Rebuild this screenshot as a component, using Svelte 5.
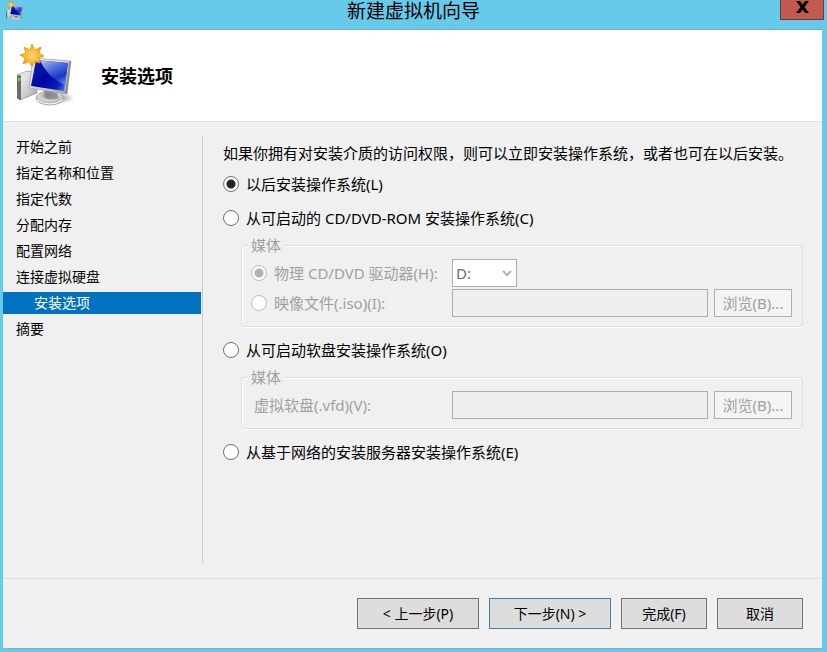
<script lang="ts">
    const steps = [
        "开始之前",
        "指定名称和位置",
        "指定代数",
        "分配内存",
        "配置网络",
        "连接虚拟硬盘",
        "安装选项",
        "摘要",
    ];
    const current = "安装选项";

    let source = $state("later");
    let media = $state("drive");
    let drive = $state("D:");
</script>

{#snippet computerIcon(id: string)}
    <svg class="computer" viewBox="0 0 58 64" aria-hidden="true">
        <defs>
            <linearGradient id="{id}-screen" x1="0" y1="0.2" x2="1" y2="0.8">
                <stop offset="0" stop-color="#0a1fb4" />
                <stop offset="0.45" stop-color="#0004a0" />
                <stop offset="0.8" stop-color="#0a1cb8" />
                <stop offset="1" stop-color="#3d74e6" />
            </linearGradient>
            <linearGradient id="{id}-glare" x1="0.1" y1="0" x2="0.7" y2="1">
                <stop offset="0" stop-color="#e2f2ff" />
                <stop offset="0.35" stop-color="#6fa0f0" />
                <stop offset="0.75" stop-color="#1f3fd0" />
                <stop offset="1" stop-color="#5a8cec" />
            </linearGradient>
            <linearGradient id="{id}-metal" x1="0" y1="0" x2="1" y2="1">
                <stop offset="0" stop-color="#f4f4f4" />
                <stop offset="0.6" stop-color="#cfcfcf" />
                <stop offset="1" stop-color="#9a9a9a" />
            </linearGradient>
            <radialGradient id="{id}-base" cx="0.45" cy="0.3" r="0.7">
                <stop offset="0" stop-color="#8a8a8a" />
                <stop offset="0.5" stop-color="#d8d8d8" />
                <stop offset="1" stop-color="#a2a2a2" />
            </radialGradient>
            <radialGradient id="{id}-star">
                <stop offset="0" stop-color="#ffd978" />
                <stop offset="0.6" stop-color="#ffb82e" />
                <stop offset="1" stop-color="#f39a10" />
            </radialGradient>
            <radialGradient id="{id}-shade">
                <stop offset="0" stop-color="#555" stop-opacity="0.6" />
                <stop offset="1" stop-color="#555" stop-opacity="0" />
            </radialGradient>
        </defs>
        <ellipse cx="43" cy="54" rx="14" ry="6" fill="url(#{id}-shade)" />
        <path d="M0 31 10 27 20 29V49L3 56 0 54Z" fill="url(#{id}-metal)" stroke="#8f8f8f" stroke-width="0.7" />
        <path d="M0 31 4 31.500V55.500L3 56 0 54Z" fill="#6d6d6d" />
        <path d="M1 34H3.500V37H1Z" fill="#5ee01d" />
        <ellipse cx="33" cy="54" rx="14" ry="7" fill="url(#{id}-base)" stroke="#a2a2a2" stroke-width="0.7" />
        <path d="M27 46 40 49 42 54Q35 57 28 54Z" fill="#7f7f7f" opacity="0.7" />
        <path d="M20 56Q33 64 46 56" fill="none" stroke="#fff" stroke-width="1" />
        <path d="M16 14 54 17 50 50 12 44Z" fill="url(#{id}-metal)" stroke="#a7a7a7" stroke-width="0.8" stroke-linejoin="round" />
        <path d="M54 17 50 50 48 49.500 52 17.500Z" fill="#8d8d8d" />
        <path d="M19 16 51 19 47 47 14 42Z" fill="url(#{id}-screen)" />
        <path d="M23 16.500 51 19 48 41 42 38Q29 30 23 16.500Z" fill="url(#{id}-glare)" opacity="0.75" />
        <path d="M15 0 17.500 6 24 3 22 9 27 12 22 14 23 19 18 17.500 15 23 12 17.500 6 20 8 14 3 11 9 9 7 3 13 6Z" fill="url(#{id}-star)" stroke="#e99514" stroke-width="0.8" stroke-linejoin="round" />
    </svg>
{/snippet}

<div class="window">
    <header class="titlebar">
        <span class="title-icon">{@render computerIcon("small")}</span>
        <h1>新建虚拟机向导</h1>
        <button class="close" type="button" aria-label="关闭">
            <svg viewBox="0 0 13 13" aria-hidden="true">
                <path d="M0 0H4L6.500 3.500 9 0H13L8.500 6 13 12H9L6.500 8.500 4 12H0L4.500 6Z" />
            </svg>
        </button>
    </header>

    <div class="client">
        <div class="banner">
            <span class="banner-icon">{@render computerIcon("large")}</span>
            <h2>安装选项</h2>
        </div>

        <div class="body">
            <nav>
                <ol>
                    {#each steps as step}
                        <li class:current={step === current}>
                            <a href="#step" aria-current={step === current ? "step" : undefined}>{step}</a>
                        </li>
                    {/each}
                </ol>
            </nav>

            <main>
                <p>如果你拥有对安装介质的访问权限，则可以立即安装操作系统，或者也可在以后安装。</p>

                <label class="option">
                    <input type="radio" name="source" value="later" bind:group={source} />
                    以后安装操作系统(L)
                </label>
                <label class="option">
                    <input type="radio" name="source" value="cd" bind:group={source} />
                    从可启动的 CD/DVD-ROM 安装操作系统(C)
                </label>

                <fieldset disabled={source !== "cd"}>
                    <legend>媒体</legend>
                    <div class="row">
                        <label>
                            <input type="radio" name="media" value="drive" bind:group={media} />
                            物理 CD/DVD 驱动器(H):
                        </label>
                        <span class="select">
                            <select bind:value={drive} aria-label="物理 CD/DVD 驱动器">
                                <option>D:</option>
                            </select>
                            <svg viewBox="0 0 10 7" aria-hidden="true">
                                <path d="M1 1 5 5 9 1" />
                            </svg>
                        </span>
                    </div>
                    <div class="row">
                        <label>
                            <input type="radio" name="media" value="iso" bind:group={media} />
                            映像文件(.iso)(I):
                        </label>
                        <input type="text" aria-label="映像文件(.iso)" />
                        <button type="button">浏览(B)...</button>
                    </div>
                </fieldset>

                <label class="option">
                    <input type="radio" name="source" value="floppy" bind:group={source} />
                    从可启动软盘安装操作系统(O)
                </label>

                <fieldset disabled={source !== "floppy"}>
                    <legend>媒体</legend>
                    <div class="row">
                        <label class="plain" for="vfd">虚拟软盘(.vfd)(V):</label>
                        <input type="text" id="vfd" />
                        <button type="button">浏览(B)...</button>
                    </div>
                </fieldset>

                <label class="option">
                    <input type="radio" name="source" value="network" bind:group={source} />
                    从基于网络的安装服务器安装操作系统(E)
                </label>
            </main>
        </div>

        <footer>
            <button class="wide" type="button">&lt; 上一步(P)</button>
            <button class="wide default" type="button">下一步(N) &gt;</button>
            <button type="button">完成(F)</button>
            <button type="button">取消</button>
        </footer>
    </div>
</div>

<style>
    :global(body) {
        margin: 0;
    }

    .window {
        box-sizing: border-box;
        display: flex;
        flex-direction: column;
        min-height: 100vh;
        padding: 0 5px 3px 3px;
        background: #66caea;
        color: #000;
        font: 15px/20px "Noto Sans", "Noto Sans CJK SC", sans-serif;
    }

    .titlebar {
        display: grid;
        grid-template-columns: 1fr auto 1fr;
        align-items: start;
        height: 29px;
        margin-right: -2px;
    }

    .title-icon {
        width: 18px;
        margin: 1px 0 0 3px;
    }

    .computer {
        display: block;
        width: 100%;
    }

    h1 {
        margin: 0;
        font-family: "Liberation Sans", "Noto Sans CJK SC", sans-serif;
        font-size: 19px;
        font-weight: 400;
        line-height: 24px;
    }

    .close {
        justify-self: end;
        box-sizing: border-box;
        width: 44px;
        height: 20px;
        padding: 0 0 4px 1px;
        border: 1px solid #6b3a3a;
        border-top: 0;
        background: #c35a50;
        line-height: 0;
    }

    .close svg {
        width: 13px;
        height: 13px;
    }

    .client {
        flex: 1;
        display: flex;
        flex-direction: column;
        border-top: 1px solid #7aa9bf;
        border-bottom: 1px solid #7fb4c8;
        background: #f0f0f0;
    }

    .banner {
        display: flex;
        align-items: center;
        gap: 26px;
        height: 91px;
        padding-left: 14px;
        border-bottom: 1px solid #dfdfdf;
        background: #fff;
    }

    .banner-icon {
        width: 58px;
    }

    h2 {
        margin: 0;
        font-size: 18px;
        font-weight: 700;
    }

    .body {
        flex: 1;
        display: flex;
        padding: 14px 0 15px;
    }

    nav {
        box-sizing: border-box;
        width: 200px;
        padding-right: 1px;
        border-right: 1px solid #cdcdcd;
        font-size: 14px;
        line-height: 22px;
    }

    ol {
        display: flex;
        flex-direction: column;
        gap: 4px;
        margin: 0;
        padding: 0;
        list-style: none;
    }

    li {
        padding-left: 13px;
    }

    li.current {
        padding-left: 31px;
        background: #0072bf;
        color: #fff;
    }

    a {
        display: block;
        color: inherit;
        text-decoration: none;
    }

    main {
        flex: 1;
        padding: 7px 19px 0 20px;
    }

    p {
        margin: 0 0 11px;
        white-space: nowrap;
    }

    label {
        display: flex;
        align-items: center;
        gap: 7px;
        white-space: nowrap;
    }

    .option + .option {
        margin-top: 14px;
    }

    input[type="radio"] {
        appearance: none;
        flex: none;
        box-sizing: border-box;
        width: 16px;
        height: 16px;
        margin: 0;
        border: 1px solid #707070;
        border-radius: 50%;
        background: #fff;
    }

    input[type="radio"]:checked {
        background: radial-gradient(circle, #222 4px, #fff 5px);
    }

    input[type="radio"]:disabled {
        border-color: #b8bcbc;
    }

    input[type="radio"]:checked:disabled {
        background: radial-gradient(circle, #adb2b5 4px, #fff 5px);
    }

    fieldset {
        min-width: 0;
        margin: 7px 0 13px 18px;
        padding: 4px 10px 9px 9px;
        border: 1px solid #d5dfe5;
        border-radius: 3px;
        box-shadow:
            inset 1px 1px #fff,
            0 1px #fff;
    }

    fieldset:disabled,
    fieldset:disabled label {
        color: #a0a0a0;
    }

    legend {
        margin-left: -3px;
        padding: 0 3px;
        background: #f0f0f0;
    }

    .row {
        display: grid;
        grid-template-columns: 195px 1fr 78px;
        align-items: center;
        gap: 6px;
    }

    .row + .row {
        margin-top: 2px;
    }

    .plain {
        padding-left: 3px;
    }

    input[type="text"] {
        box-sizing: border-box;
        width: 100%;
        height: 28px;
        padding: 0 4px;
        border: 1px solid #abadb3;
        background: #fff;
        font: inherit;
    }

    input[type="text"]:disabled {
        border-color: #aab0b0;
        background: #efefef;
    }

    .select {
        position: relative;
        width: 65px;
        height: 28px;
    }

    select {
        appearance: none;
        box-sizing: border-box;
        width: 100%;
        height: 100%;
        padding: 0 3px;
        border: 1px solid #aab0b0;
        border-radius: 0;
        background: #fff;
        color: #6d6d6d;
        font: inherit;
        opacity: 1;
    }

    .select svg {
        position: absolute;
        top: 11px;
        right: 5px;
        width: 10px;
        height: 7px;
        fill: none;
        stroke: #b0b4b4;
        stroke-width: 2;
        pointer-events: none;
    }

    .row button {
        box-sizing: border-box;
        height: 28px;
        padding: 0;
        border: 1px solid #707070;
        background: #ddd;
        font: inherit;
    }

    .row button:disabled {
        border-color: #aab0b0;
        background: #f4f4f4;
        color: #a0a0a0;
    }

    footer {
        display: flex;
        justify-content: flex-end;
        gap: 10px;
        padding: 19px;
        border-top: 1px solid #dfdfdf;
    }

    footer button {
        box-sizing: border-box;
        width: 86px;
        height: 31px;
        padding: 0;
        border: 1px solid #707070;
        background: #ddd;
        color: #000;
        font: inherit;
        font-size: 14px;
    }

    footer .wide {
        width: 122px;
    }

    footer .default {
        border-color: #3c7fb1;
    }
</style>
